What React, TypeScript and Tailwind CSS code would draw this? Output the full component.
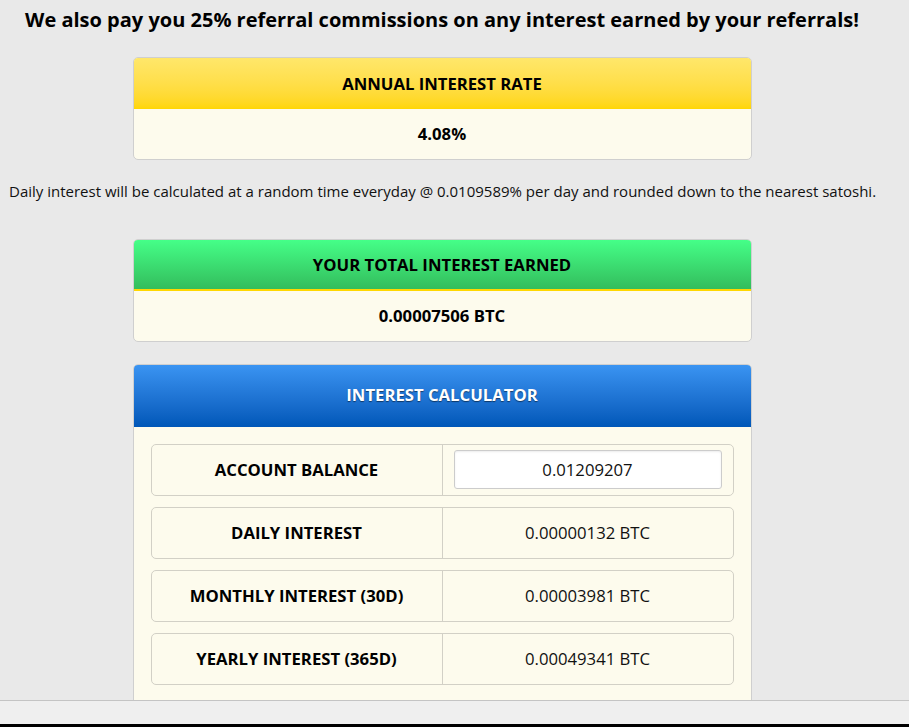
const font = { fontFamily: '"Open Sans", "Noto Sans", sans-serif' };

function InfoBox({ title, value, header }: { title: string; value: string; header: string }) {
  return (
    <div className="mx-auto w-[619px] overflow-hidden rounded-[5px] border border-[#cfcfcf] bg-[#fdfbed]">
      <div className={`flex h-[51px] items-center justify-center text-[16.7px] font-bold text-black ${header}`}>{title}</div>
      <div className="flex h-[50px] items-center justify-center text-[16.7px] font-bold text-black">{value}</div>
    </div>
  );
}

const rows = [
  { label: "DAILY INTEREST", value: "0.00000132 BTC" },
  { label: "MONTHLY INTEREST (30D)", value: "0.00003981 BTC" },
  { label: "YEARLY INTEREST (365D)", value: "0.00049341 BTC" },
];

function Row({ label, children }: { label: string; children: React.ReactNode }) {
  return (
    <div className="flex h-[52px] rounded-[5px] border border-[#d2d0c6]">
      <div className="flex w-[291px] items-center justify-center border-r border-[#d2d0c6] text-[16.7px] font-bold text-black">{label}</div>
      <div className="flex flex-1 items-center justify-center px-[11px] text-[16.7px] text-[#111]">{children}</div>
    </div>
  );
}

export default function App() {
  return (
    <div className="flex h-[727px] flex-col bg-[#e9e9e9]" style={font}>
      <div className="h-[700px] w-[884px] overflow-hidden">
        <h1 className="pt-[6px] text-center text-[20px] font-bold leading-[28px] text-black">
          We also pay you 25% referral commissions on any interest earned by your referrals!
        </h1>
        <div className="mt-[23px]">
          <InfoBox title="ANNUAL INTEREST RATE" value="4.08%" header="bg-gradient-to-b from-[#ffe76a] to-[#ffd600]" />
        </div>
        <p className="mt-[21px] pl-[9px] text-[15px] leading-[20px] whitespace-nowrap text-[#111]">
          Daily interest will be calculated at a random time everyday @ 0.0109589% per day and rounded down to the nearest satoshi.
        </p>
        <div className="mt-[38px]">
          <InfoBox
            title="YOUR TOTAL INTEREST EARNED"
            value="0.00007506 BTC"
            header="border-b-2 border-[#ffd700] bg-gradient-to-b from-[#45ff88] to-[#33bd5c]"
          />
        </div>
        <div className="mx-auto mt-[22px] w-[619px] overflow-hidden rounded-[5px] border border-[#cfcfcf] bg-[#fdfbed]">
          <div className="flex h-[62px] items-center justify-center pb-[2px] bg-gradient-to-b from-[#3a94f2] to-[#0057b8] text-[16.7px] font-bold text-white [text-shadow:0_1px_1px_rgba(0,0,0,0.5)]">
            INTEREST CALCULATOR
          </div>
          <div className="flex flex-col gap-[11px] px-[17px] pt-[17px] pb-[20px]">
            <Row label="ACCOUNT BALANCE">
              <input
                readOnly
                value="0.01209207"
                className="mb-[1px] h-[39px] w-full rounded-[3px] border border-[#cccccc] bg-white text-center text-[16.7px] text-[#111] shadow-[inset_0_1px_2px_rgba(0,0,0,0.08)] outline-none"
                style={font}
              />
            </Row>
            {rows.map((r) => (
              <Row key={r.label} label={r.label}>
                {r.value}
              </Row>
            ))}
          </div>
        </div>
      </div>
      <div className="h-[24px] border-t border-[#c4c4c4] bg-[#efefef]" />
      <div className="flex-1 bg-black" />
    </div>
  );
}
